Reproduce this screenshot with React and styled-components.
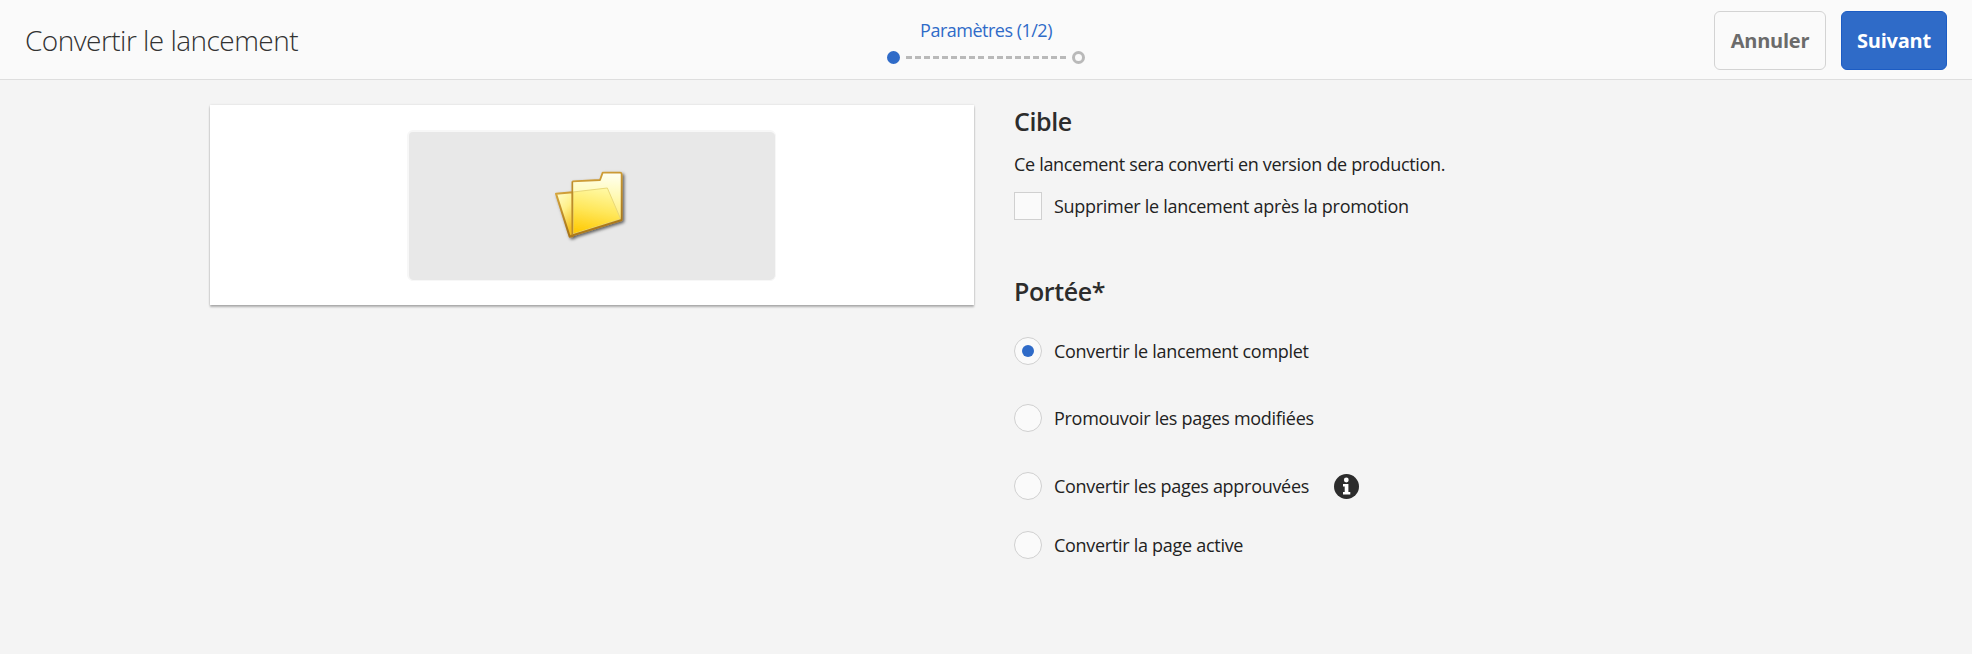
import React, { useState } from "react";
import styled, { createGlobalStyle } from "styled-components";

const GlobalStyle = createGlobalStyle`
  *, *::before, *::after { box-sizing: border-box; }
  body {
    margin: 0;
    background: #f4f4f4;
    color: #222;
    font-family: "Open Sans", "Noto Sans", sans-serif;
    font-size: 18px;
    line-height: 24px;
    letter-spacing: -0.32px;
  }
`;

const Header = styled.header`
  display: grid;
  grid-template-columns: 1fr auto 1fr;
  height: 80px;
  background: #fafafa;
  border-bottom: 1px solid #dedede;
`;

const Title = styled.h1`
  margin: 1px 0 0 25px;
  align-self: center;
  font-size: 28px;
  font-weight: 300;
  line-height: 40px;
  letter-spacing: -0.53px;
  color: #323232;
`;

const Wizard = styled.div`
  display: flex;
  flex-direction: column;
  align-items: center;
  gap: 9px;
  width: 198px;
  padding-top: 18px;
`;

const WizardLabel = styled.div`
  color: #2f6bc8;
  letter-spacing: -0.5px;
  white-space: nowrap;
`;

const Steps = styled.div`
  display: flex;
  align-items: center;
  align-self: stretch;
  height: 13px;
`;

const Step = styled.span`
  width: 13px;
  height: 13px;
  border-radius: 50%;
  border: 3px solid ${({ $active }) => ($active ? "#2f6bc8" : "#b9b9b9")};
  background: ${({ $active }) => ($active ? "#2f6bc8" : "transparent")};
`;

const StepLine = styled.span`
  width: 160px;
  height: 3px;
  margin: 0 6px;
  background: repeating-linear-gradient(90deg, #b9b9b9 0 6px, transparent 6px 9.06px);
`;

const Actions = styled.div`
  display: flex;
  justify-content: flex-end;
  gap: 15px;
  padding: 11px 25px 0 0;
`;

const Button = styled.button`
  width: ${({ $primary }) => ($primary ? 106 : 112)}px;
  height: 59px;
  padding: 0;
  border: 1px solid ${({ $primary }) => ($primary ? "#1c5cc4" : "#d3d3d3")};
  border-radius: 6px;
  background: ${({ $primary }) => ($primary ? "#2f6bc8" : "#fafafa")};
  color: ${({ $primary }) => ($primary ? "#fff" : "#6b6b6b")};
  font: 700 20px/28px "Open Sans", sans-serif;
  letter-spacing: -0.25px;
`;

const Main = styled.main`
  display: flex;
  gap: 40px;
  padding: 25px 210px 0;
`;

const PreviewCard = styled.section`
  display: flex;
  justify-content: center;
  align-items: center;
  width: 764px;
  height: 200px;
  background: #fff;
  box-shadow: 0 2px 2px rgba(0, 0, 0, 0.28), 0 0 2px rgba(0, 0, 0, 0.12);
`;

const Thumbnail = styled.div`
  display: flex;
  justify-content: center;
  align-items: center;
  width: 369px;
  height: 151px;
  margin-right: 2px;
  padding: 0 5px 4px 0;
  border: 2px solid #f7f7f7;
  border-width: 2px 1px 1px 2px;
  border-radius: 6px;
  background: #e8e8e8;
`;

const FolderDrawing = styled.svg`
  width: 80px;
  height: 80px;
`;

const Form = styled.form`
  display: flex;
  flex-direction: column;
`;

const Heading = styled.h2`
  margin: ${({ $top = 0 }) => $top}px 0 0;
  font-size: 25px;
  font-weight: 600;
  line-height: 32px;
  letter-spacing: -0.4px;
  color: #2c2c2c;
`;

const Description = styled.p`
  margin: 15px 0 16px;
`;

const Field = styled.label`
  display: flex;
  align-items: center;
  gap: 12px;
  height: 28px;
  white-space: nowrap;
`;

const FieldText = styled.span`
  letter-spacing: -0.29px;
`;

const Control = styled.input`
  appearance: none;
  display: grid;
  place-items: center;
  width: 28px;
  height: 28px;
  margin: 0;
  border: 1px solid #d0d0d0;
  border-radius: ${({ type }) => (type === "radio" ? "50%" : "0")};
  background: #fafafa;

  &:checked::before {
    content: "";
    width: 12px;
    height: 12px;
    border-radius: 50%;
    background: #2f6bc8;
  }
`;

const RadioList = styled.div`
  display: flex;
  flex-direction: column;
  padding-top: 30px;
`;

const RadioRow = styled.div`
  display: flex;
  align-items: center;
  gap: 25px;
  margin-bottom: ${({ $space }) => $space}px;
`;

const InfoDrawing = styled.svg`
  width: 25px;
  height: 25px;
`;

function FolderIcon() {
  return (
    <FolderDrawing viewBox="60 40 240 240">
      <defs>
        <linearGradient id="back" x1="0" y1="0" x2="0.4" y2="1">
          <stop offset="0" stopColor="#fffdd0" />
          <stop offset="0.5" stopColor="#fff08a" />
          <stop offset="1" stopColor="#f3bf20" />
        </linearGradient>
        <linearGradient id="front" x1="0.5" y1="0" x2="0.45" y2="1">
          <stop offset="0" stopColor="#fffff0" />
          <stop offset="0.35" stopColor="#fffab8" />
          <stop offset="1" stopColor="#ffe14a" />
        </linearGradient>
        <linearGradient id="flap" x1="0.6" y1="0" x2="0.4" y2="1">
          <stop offset="0" stopColor="#fff9a4" />
          <stop offset="0.5" stopColor="#ffe75a" />
          <stop offset="1" stopColor="#ffcb08" />
        </linearGradient>
        <linearGradient id="edge" x1="0" y1="0" x2="0.3" y2="1">
          <stop offset="0" stopColor="#d6a53c" />
          <stop offset="1" stopColor="#a9761c" />
        </linearGradient>
        <filter id="shade" x="-20%" y="-20%" width="140%" height="140%">
          <feDropShadow dx="5" dy="5" stdDeviation="4" floodColor="#000" floodOpacity="0.6" />
        </filter>
      </defs>
      <g filter="url(#shade)" strokeLinejoin="round">
        <path d="M81 129 L131 125 L132 256 L122 258 Z" fill="url(#back)" stroke="url(#edge)" strokeWidth="6" />
        <path d="M130 92 L213 88 L221 66 L274 66 Q278 66 278 71 L278 208 L130 253 Z" fill="url(#front)" />
        <path d="M132 124 L235 112 L275 205 L132 250 Z" fill="url(#flap)" stroke="#e9d878" strokeWidth="3" />
        <path d="M130 92 L213 88 L221 66 L274 66 Q278 66 278 71 L278 208 L124 256" fill="none" stroke="url(#edge)" strokeWidth="5.5" />
        <path d="M130 92 L130 252" fill="none" stroke="#bd8c2a" strokeWidth="5" />
      </g>
    </FolderDrawing>
  );
}

function InfoIcon() {
  return (
    <InfoDrawing viewBox="0 0 25 25">
      <circle cx="12.5" cy="12.5" r="12.5" fill="#2c2c2c" />
      <circle cx="12.3" cy="6" r="2.4" fill="#fff" />
      <path d="M9 10h5.400v8H16.300v2.500H9v-2.500h1.700v-5.500H9z" fill="#fff" />
    </InfoDrawing>
  );
}

const scopes = [
  { id: "full", label: "Convertir le lancement complet", space: 39 },
  { id: "modified", label: "Promouvoir les pages modifiées", space: 40 },
  { id: "approved", label: "Convertir les pages approuvées", space: 31, info: true },
  { id: "current", label: "Convertir la page active", space: 0 },
];

export default function App() {
  const [scope, setScope] = useState("full");
  return (
    <>
      <GlobalStyle />
      <Header>
        <Title>Convertir le lancement</Title>
        <Wizard>
          <WizardLabel>Paramètres (1/2)</WizardLabel>
          <Steps>
            <Step $active />
            <StepLine />
            <Step />
          </Steps>
        </Wizard>
        <Actions>
          <Button type="button">Annuler</Button>
          <Button type="button" $primary>Suivant</Button>
        </Actions>
      </Header>
      <Main>
        <PreviewCard>
          <Thumbnail>
            <FolderIcon />
          </Thumbnail>
        </PreviewCard>
        <Form>
          <Heading>Cible</Heading>
          <Description>Ce lancement sera converti en version de production.</Description>
          <Field>
            <Control type="checkbox" />
            <FieldText>Supprimer le lancement après la promotion</FieldText>
          </Field>
          <Heading $top={55}>Portée*</Heading>
          <RadioList>
            {scopes.map(({ id, label, space, info }) => (
              <RadioRow key={id} $space={space}>
                <Field>
                  <Control type="radio" name="scope" checked={scope === id} onChange={() => setScope(id)} />
                  <FieldText>{label}</FieldText>
                </Field>
                {info && <InfoIcon />}
              </RadioRow>
            ))}
          </RadioList>
        </Form>
      </Main>
    </>
  );
}
